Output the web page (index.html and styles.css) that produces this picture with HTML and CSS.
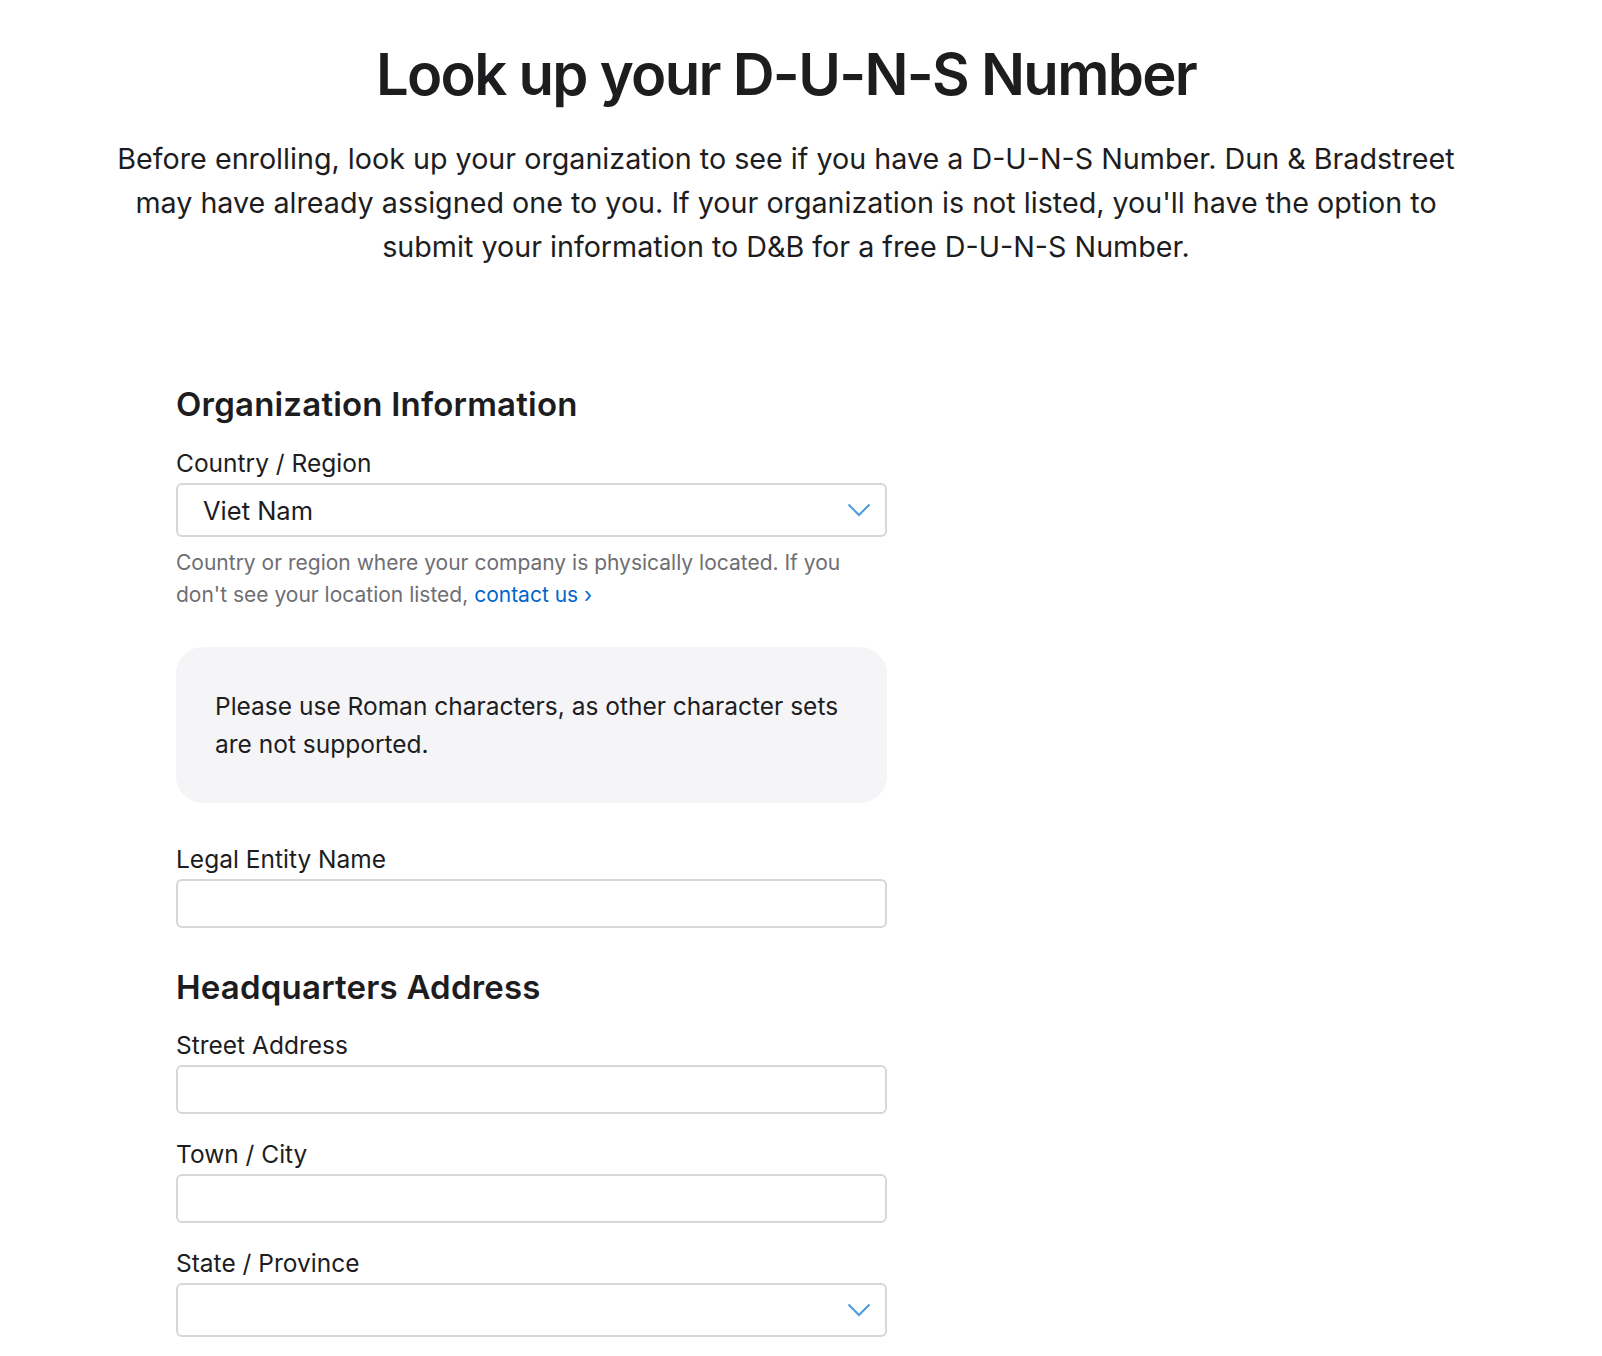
FILE: index.html
```html
<!DOCTYPE html>
<html lang="en">
<head>
    <meta charset="UTF-8">
    <meta name="viewport" content="width=device-width, initial-scale=1.0">
    <title>Look up your D-U-N-S Number</title>
    <link rel="stylesheet" href="styles.css">
</head>
<body>
    <header class="hero">
        <h1>Look up your D-U-N-S Number</h1>
        <p class="intro">Before enrolling, look up your organization to see if you have a D-U-N-S Number. Dun &amp; Bradstreet may have already assigned one to you. If your organization is not listed, you'll have the option to submit your information to D&amp;B for a free D-U-N-S Number.</p>
    </header>

    <main class="container">
        <form class="lookup-form">
            <h2>Organization Information</h2>

            <div class="field">
                <label for="country">Country / Region</label>
                <div class="select-wrap">
                    <select id="country">
                        <option>Viet Nam</option>
                    </select>
                    <svg class="chevron" width="24" height="14" viewBox="0 0 24 14"><path d="M1.5 1.5 L12 12 L22.5 1.5" fill="none" stroke="#4a9be0" stroke-width="2"/></svg>
                </div>
                <p class="help">Country or region where your company is physically located. If you don't see your location listed, <a href="#">contact us ›</a></p>
            </div>

            <div class="notice">
                <p>Please use Roman characters, as other character sets are not supported.</p>
            </div>

            <div class="field">
                <label for="legalName">Legal Entity Name</label>
                <input type="text" id="legalName">
            </div>

            <h2 class="section-gap">Headquarters Address</h2>

            <div class="field">
                <label for="street">Street Address</label>
                <input type="text" id="street">
            </div>

            <div class="field">
                <label for="city">Town / City</label>
                <input type="text" id="city">
            </div>

            <div class="field">
                <label for="state">State / Province</label>
                <div class="select-wrap">
                    <select id="state">
                        <option></option>
                    </select>
                    <svg class="chevron" width="24" height="14" viewBox="0 0 24 14"><path d="M1.5 1.5 L12 12 L22.5 1.5" fill="none" stroke="#4a9be0" stroke-width="2"/></svg>
                </div>
            </div>
        </form>
    </main>
</body>
</html>
```

FILE: styles.css
```css
body {
    margin: 0;
    font-family: Inter, "Noto Sans", sans-serif;
    color: #1d1d1f;
    background-color: white;
}
.hero {
    text-align: center;
    padding: 41px 30px 0 0;
}
h1 {
    margin: 0;
    font-size: 58px;
    line-height: 66px;
    font-weight: 600;
    letter-spacing: -1.7px;
}
.intro {
    max-width: 1360px;
    margin: 30px auto 0;
    font-size: 28.7px;
    line-height: 44px;
}
.container {
    max-width: 1250px;
    margin: 0 auto;
    padding-top: 115px;
}
.lookup-form {
    width: 711px;
}
h2 {
    margin: 0 0 24px;
    font-size: 33px;
    line-height: 40px;
    font-weight: 600;
    letter-spacing: 0.2px;
}
.section-gap {
    margin-top: 39px;
    margin-bottom: 23px;
}
.field {
    margin-bottom: 25px;
}
label {
    display: block;
    font-size: 24.5px;
    line-height: 30px;
    margin-bottom: 5px;
}
input[type="text"], select {
    display: block;
    width: 100%;
    box-sizing: border-box;
    border: 2px solid #d6d6db;
    border-radius: 6px;
    background-color: white;
    font-family: inherit;
    color: #1d1d1f;
    margin: 0;
}
input[type="text"] {
    height: 49px;
    padding: 0 24px;
    font-size: 24.5px;
}
.select-wrap {
    position: relative;
}
select {
    height: 54px;
    padding: 0 60px 0 25px;
    font-size: 25.5px;
    appearance: none;
    -webkit-appearance: none;
}
.chevron {
    position: absolute;
    right: 16px;
    top: 20px;
    pointer-events: none;
}
.help {
    max-width: 680px;
    margin: 10px 0 0;
    font-size: 21px;
    line-height: 31.5px;
    color: #6e6e73;
}
.help a {
    color: #0066cc;
    text-decoration: none;
}
.notice {
    background-color: #f5f5f7;
    border-radius: 27px;
    padding: 40px 39px;
    margin: 37px 0 41px;
}
.notice p {
    margin: 0;
    font-size: 24.5px;
    line-height: 38px;
}
```
